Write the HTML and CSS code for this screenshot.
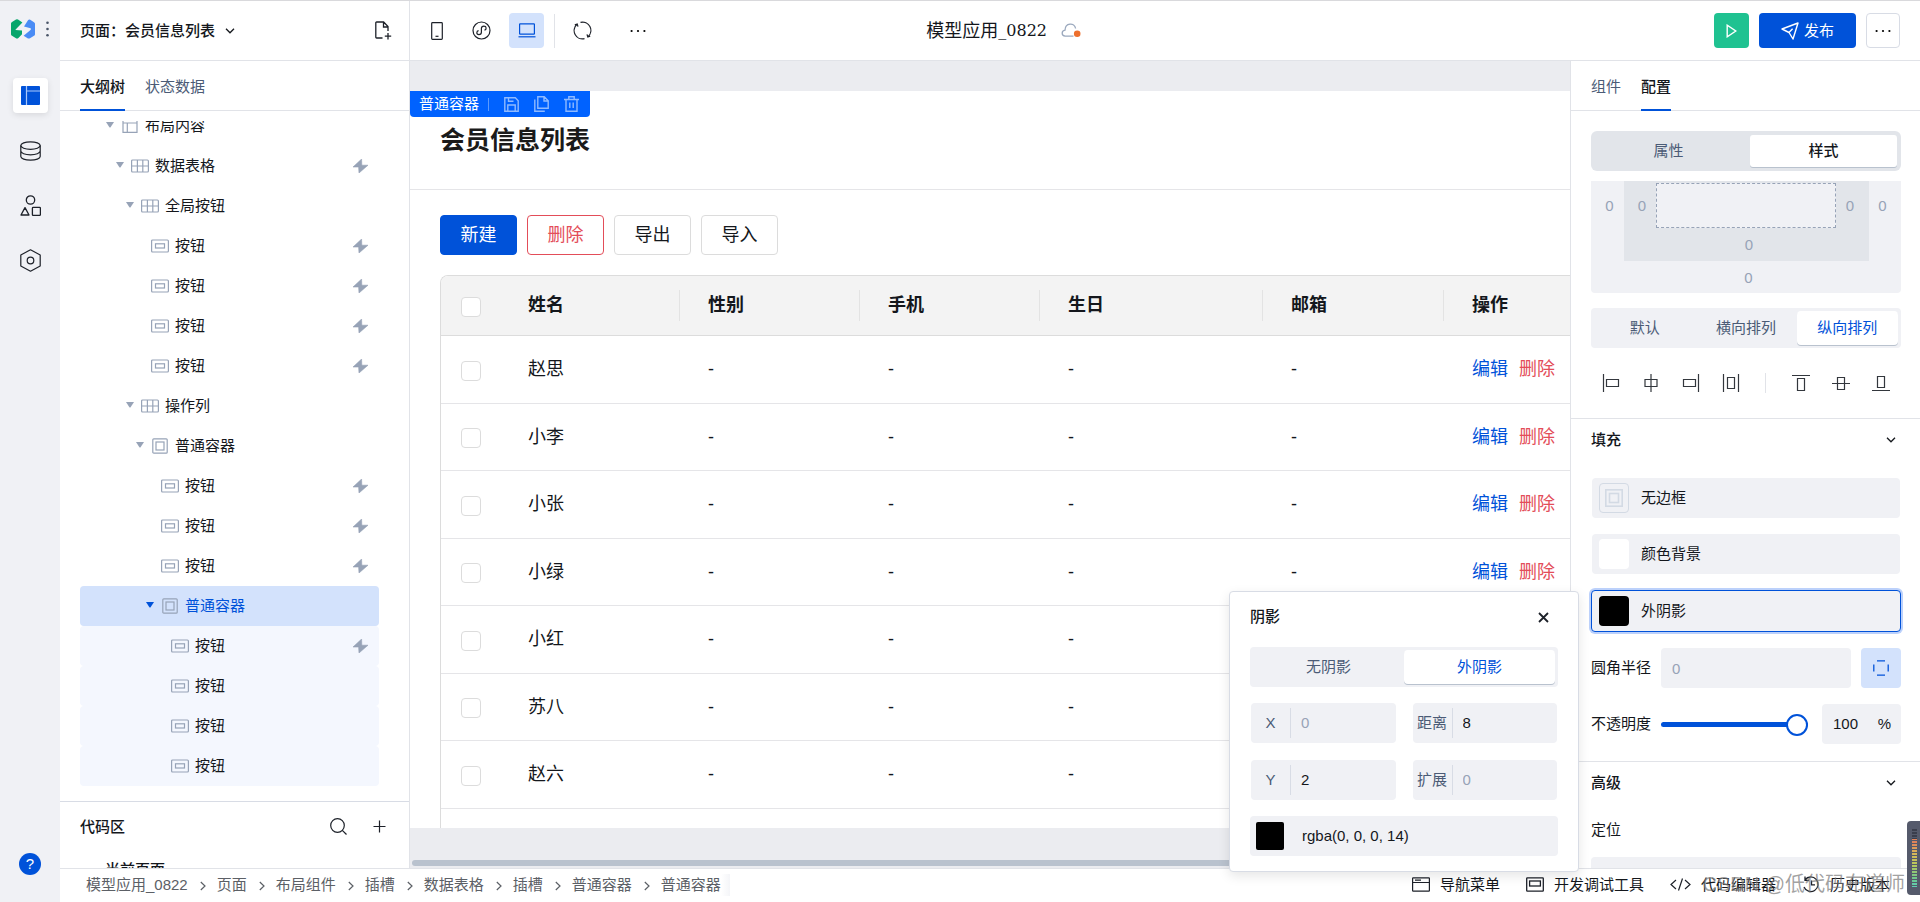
FILE: index.html
```html
<!DOCTYPE html>
<html lang="zh-CN">
<head>
<meta charset="utf-8">
<title>模型应用_0822</title>
<link rel="stylesheet" href="styles.css">
</head>
<body>
<svg class="sprite" aria-hidden="true">
  <symbol id="i-caret" viewBox="0 0 8 6"><path d="M0 0h8L4.6 5.2a.8.8 0 0 1-1.2 0z" fill="currentColor"/></symbol>
  <symbol id="i-bolt" viewBox="0 0 15 14"><path d="M8.600 0 0 8h5.600L6 14l9-7.800H8.800z" fill="currentColor" stroke="currentColor" stroke-width=".6"/></symbol>
  <symbol id="i-layout" viewBox="0 0 18 14"><path d="M2 .7h14v12.6H2zM2 4h14M6.3 4v9.3" fill="none" stroke="currentColor" stroke-width="1.2"/></symbol>
  <symbol id="i-grid" viewBox="0 0 18 14"><rect x=".6" y="1" width="16.8" height="12" rx="1" fill="none" stroke="currentColor" stroke-width="1.2"/><path d="M.6 7h16.8M6.4 1v12M11.8 1v12" stroke="currentColor" stroke-width="1.2"/></symbol>
  <symbol id="i-btn" viewBox="0 0 18 14"><rect x=".6" y="1" width="16.8" height="12" rx="1" fill="none" stroke="currentColor" stroke-width="1.2"/><rect x="4.5" y="4.8" width="9" height="4.2" fill="none" stroke="currentColor" stroke-width="1.2"/></symbol>
  <symbol id="i-box" viewBox="0 0 18 16"><rect x="1.8" y=".8" width="14.4" height="14.4" rx="1" fill="none" stroke="currentColor" stroke-width="1.2"/><rect x="5" y="4" width="8" height="8" fill="none" stroke="currentColor" stroke-width="1.2"/></symbol>
  <symbol id="i-down" viewBox="0 0 10 6"><path d="m1 .8 4 4 4-4" fill="none" stroke="currentColor" stroke-width="1.3"/></symbol>
  <symbol id="i-right" viewBox="0 0 6 10"><path d="m.8 1 4.2 4-4.2 4" fill="none" stroke="currentColor" stroke-width="1.2"/></symbol>
  <symbol id="i-more" viewBox="0 0 16 4"><circle cx="1.6" cy="2" r="1.1"/><circle cx="8" cy="2" r="1.1"/><circle cx="14.4" cy="2" r="1.1"/></symbol>
</svg>

<div class="app">
  <nav class="rail" aria-label="主导航">
    <div class="brand">
      <svg width="24" height="20" viewBox="0 0 24 20" role="img" aria-label="标志"><path d="M0 4.600Q0 3.600 1 3L5 .6q1-.6 2 0l4.400 2.800L5.600 9.400Q3.800 11 4.600 11L11 11.400v3.800L7.400 19q-1.400 1-2.800 0L1 16.800Q0 16.200 0 15.200z" fill="#07a66c"/><path d="M13 7.600 17 1.200Q18 0 19.200.8l3.800 2.400q1 .6 1 1.600v10.400q0 1-1 1.600L19 19.200q-1 .7-2 .2l-4.400-2.600 6.600-5.600Q21 9.600 18.600 9z" fill="#4a8cf5"/></svg>
      <svg width="3" height="16" viewBox="0 0 3 16" fill="#4a5568"><circle cx="1.500" cy="1.800" r="1.300"/><circle cx="1.500" cy="8" r="1.300"/><circle cx="1.500" cy="14.200" r="1.300"/></svg>
    </div>
    <button class="rail-btn active" aria-label="页面"><svg width="19" height="19" viewBox="0 0 19 19"><rect width="19" height="19" rx="1" fill="#0052d9"/><path d="M5.500 0v19M5.500 5h13.500" stroke="#a9c8fb" stroke-width="1.200"/></svg></button>
    <button class="rail-btn" aria-label="数据"><svg width="21" height="20" viewBox="0 0 21 20" fill="none" stroke="#1d2129" stroke-width="1.200"><ellipse cx="10.500" cy="4.600" rx="9.700" ry="3.800"/><path d="M.8 4.600v10.800c0 2.100 4.300 3.800 9.700 3.800s9.700-1.700 9.700-3.800V4.600M.8 10c0 2.100 4.300 3.800 9.700 3.800s9.700-1.700 9.700-3.800"/></svg></button>
    <button class="rail-btn" aria-label="组件"><svg width="21" height="21" viewBox="0 0 21 21" fill="none" stroke="#1d2129" stroke-width="1.300"><circle cx="10.500" cy="5" r="4.200"/><path d="M5 12.600 9 20H1z" stroke-linejoin="round"/><rect x="12.400" y="12.400" width="8" height="8" rx=".8"/></svg></button>
    <button class="rail-btn" aria-label="设置"><svg width="21" height="23" viewBox="0 0 21 23" fill="none" stroke="#1d2129" stroke-width="1.200"><path d="M10.500.8 20.200 6v11l-9.700 5.200L.8 17V6z" stroke-linejoin="round"/><circle cx="10.500" cy="11.500" r="3.300"/></svg></button>
    <button class="help" aria-label="帮助">?</button>
  </nav>

  <div class="work">
    <header class="side-head">
      <button class="page-pick"><span>页面：会员信息列表</span><svg width="10" height="6"><use href="#i-down"/></svg></button>
      <button class="plain" aria-label="新建页面"><svg width="17" height="19" viewBox="0 0 17 19" fill="none" stroke="#1d2129" stroke-width="1.300"><path d="M7.500 17H1.600a.8.8 0 0 1-.8-.8V1.800A.8.8 0 0 1 1.600 1h7l4.400 4.600V10M8.500 1v5H13M13 12v6.400M9.800 15.200h6.400"/></svg></button>
    </header>

    <header class="toolbar">
      <div class="tools">
        <button class="tool" aria-label="手机"><svg width="12" height="18" viewBox="0 0 12 18" fill="none" stroke="#1d2129" stroke-width="1.200"><rect x=".7" y=".7" width="10.600" height="16.600" rx=".8"/><path d="M4.500 14.300h3"/></svg></button>
        <button class="tool" aria-label="小程序"><svg width="19" height="19" viewBox="0 0 19 19" fill="none" stroke="#1d2129" stroke-width="1.200"><circle cx="9.500" cy="9.500" r="8.500"/><path d="M6.600 9.600C4.400 9.800 4 13.600 6.900 13.600c1.600 0 2.500-1 2.500-2.300V7.500c0-1.300 1-2.300 2.500-2.300 2.900 0 2.800 3.600.6 4"/></svg></button>
        <button class="tool on" aria-label="电脑"><svg width="18" height="15" viewBox="0 0 18 15" fill="none" stroke="#0052d9" stroke-width="1.200"><rect x="1.600" y=".8" width="14.800" height="10.400" rx=".5"/><path d="M.5 13.800h17"/></svg></button>
        <span class="vline"></span>
        <button class="tool" aria-label="刷新"><svg width="19" height="19" viewBox="0 0 19 19" fill="none" stroke="#1d2129" stroke-width="1.200"><path d="M11.500 17.600A8.300 8.300 0 0 1 4 3.300M7.500 1.400A8.300 8.300 0 0 1 15 15.700M1.800 3.800l2.400-.8.800 2.700M17.200 15.200l-2.400.8-.8-2.700"/></svg></button>
        <button class="tool gap" aria-label="更多"><svg width="16" height="4"><use href="#i-more"/></svg></button>
      </div>
      <h1 class="app-title"><span>模型应用</span><span class="app-no">_0822</span>
        <svg width="20" height="15" viewBox="0 0 20 15"><path d="M12.500 13.200H4.200C.2 13 .2 7.800 4 7.200 4.200-.6 13.600-.6 14.600 5.500" fill="none" stroke="#9aa8bd" stroke-width="1.300"/><circle cx="16.200" cy="10.800" r="3.300" fill="#ed6f2d"/></svg>
      </h1>
      <div class="actions">
        <button class="run" aria-label="预览"><svg width="11" height="14" viewBox="0 0 11 14"><path d="M1.200 1.200v11.600L9.800 7z" fill="none" stroke="#fff" stroke-width="1.400"/></svg></button>
        <button class="publish"><svg width="18" height="18" viewBox="0 0 18 18" fill="none" stroke="#fff" stroke-width="1.400"><path d="M1 7 17 1l-5 16-4-6.500z" stroke-linejoin="round"/><path d="m8 10.500 3.600-3.800"/></svg>发布</button>
        <button class="outline" aria-label="更多操作"><svg width="16" height="4"><use href="#i-more"/></svg></button>
      </div>
    </header>

    <aside class="side">
      <div class="tabs" role="tablist">
        <button class="tab on" role="tab">大纲树</button>
        <button class="tab" role="tab">状态数据</button>
      </div>
      <div class="tree-wrap">
        <ul class="tree">
          <li class="row l0"><svg class="caret"><use href="#i-caret"/></svg><svg class="ico"><use href="#i-layout"/></svg>布局内容</li>
          <li class="row l1"><svg class="caret"><use href="#i-caret"/></svg><svg class="ico"><use href="#i-grid"/></svg>数据表格<svg class="bolt"><use href="#i-bolt"/></svg></li>
          <li class="row l2"><svg class="caret"><use href="#i-caret"/></svg><svg class="ico"><use href="#i-grid"/></svg>全局按钮</li>
          <li class="row l3"><span class="caret"></span><svg class="ico"><use href="#i-btn"/></svg>按钮<svg class="bolt"><use href="#i-bolt"/></svg></li>
          <li class="row l3"><span class="caret"></span><svg class="ico"><use href="#i-btn"/></svg>按钮<svg class="bolt"><use href="#i-bolt"/></svg></li>
          <li class="row l3"><span class="caret"></span><svg class="ico"><use href="#i-btn"/></svg>按钮<svg class="bolt"><use href="#i-bolt"/></svg></li>
          <li class="row l3"><span class="caret"></span><svg class="ico"><use href="#i-btn"/></svg>按钮<svg class="bolt"><use href="#i-bolt"/></svg></li>
          <li class="row l2"><svg class="caret"><use href="#i-caret"/></svg><svg class="ico"><use href="#i-grid"/></svg>操作列</li>
          <li class="row l3"><svg class="caret"><use href="#i-caret"/></svg><svg class="ico"><use href="#i-box"/></svg>普通容器</li>
          <li class="row l4"><span class="caret"></span><svg class="ico"><use href="#i-btn"/></svg>按钮<svg class="bolt"><use href="#i-bolt"/></svg></li>
          <li class="row l4"><span class="caret"></span><svg class="ico"><use href="#i-btn"/></svg>按钮<svg class="bolt"><use href="#i-bolt"/></svg></li>
          <li class="row l4"><span class="caret"></span><svg class="ico"><use href="#i-btn"/></svg>按钮<svg class="bolt"><use href="#i-bolt"/></svg></li>
          <li class="row l4 selected"><svg class="caret"><use href="#i-caret"/></svg><svg class="ico"><use href="#i-box"/></svg>普通容器</li>
          <li class="row l5 child"><span class="caret"></span><svg class="ico"><use href="#i-btn"/></svg>按钮<svg class="bolt"><use href="#i-bolt"/></svg></li>
          <li class="row l5 child"><span class="caret"></span><svg class="ico"><use href="#i-btn"/></svg>按钮</li>
          <li class="row l5 child"><span class="caret"></span><svg class="ico"><use href="#i-btn"/></svg>按钮</li>
          <li class="row l5 child"><span class="caret"></span><svg class="ico"><use href="#i-btn"/></svg>按钮</li>
        </ul>
      </div>
      <section class="code">
        <div class="code-head">
          <h2>代码区</h2>
          <button class="plain" aria-label="搜索"><svg width="17" height="17" viewBox="0 0 17 17" fill="none" stroke="#1d2129" stroke-width="1.200"><circle cx="7.500" cy="7.500" r="6.800"/><path d="m12.300 12.300 4.200 4.200"/></svg></button>
          <button class="plain" aria-label="新增"><svg width="13" height="13" viewBox="0 0 13 13"><path d="M6.500.5v12M.5 6.500h12" stroke="#1d2129" stroke-width="1.200"/></svg></button>
        </div>
        <p class="code-item">当前页面</p>
      </section>
    </aside>

    <main class="stage">
      <div class="page">
        <div class="badge">
          <span class="badge-name">普通容器</span>
          <button class="badge-btn" aria-label="保存"><svg width="15" height="15" viewBox="0 0 15 15" fill="none" stroke="currentColor" stroke-width="1.400"><path d="M.8.800h10.500l2.900 2.900v10.500H.8zM3.800 14V8h7.400v6M4.500.800v3.400h5"/></svg></button>
          <button class="badge-btn" aria-label="复制"><svg width="15" height="16" viewBox="0 0 15 16" fill="none" stroke="currentColor" stroke-width="1.400"><path d="M3.800.8h6.400l4 4v7.400H3.800zM10 .8V5h4.200M.8 3.500v11.700h10"/></svg></button>
          <button class="badge-btn" aria-label="删除"><svg width="15" height="16" viewBox="0 0 15 16" fill="none" stroke="currentColor" stroke-width="1.400"><path d="M0 3.500h15M2 3.500v11.700h11V3.500M4.800 3.500V.800h5.400v2.700M5.800 6.500V12M9.200 6.500V12"/></svg></button>
        </div>
        <h2 class="page-title">会员信息列表</h2>
        <div class="page-body">
          <div class="btns">
            <button class="btn primary">新建</button>
            <button class="btn danger">删除</button>
            <button class="btn">导出</button>
            <button class="btn">导入</button>
          </div>
          <div class="table-wrap">
            <table class="table">
              <colgroup><col class="c-check"><col class="c-std"><col class="c-std"><col class="c-std"><col class="c-date"><col class="c-mail"><col></colgroup>
              <thead><tr><th class="check"><input type="checkbox" aria-label="全选"></th><th>姓名</th><th>性别</th><th>手机</th><th>生日</th><th>邮箱</th><th>操作</th></tr></thead>
              <tbody>
                <tr><td class="check"><input type="checkbox" aria-label="选择赵思"></td><td>赵思</td><td>-</td><td>-</td><td>-</td><td>-</td><td><a href="#">编辑</a><a href="#" class="del">删除</a></td></tr>
                <tr><td class="check"><input type="checkbox" aria-label="选择小李"></td><td>小李</td><td>-</td><td>-</td><td>-</td><td>-</td><td><a href="#">编辑</a><a href="#" class="del">删除</a></td></tr>
                <tr><td class="check"><input type="checkbox" aria-label="选择小张"></td><td>小张</td><td>-</td><td>-</td><td>-</td><td>-</td><td><a href="#">编辑</a><a href="#" class="del">删除</a></td></tr>
                <tr><td class="check"><input type="checkbox" aria-label="选择小绿"></td><td>小绿</td><td>-</td><td>-</td><td>-</td><td>-</td><td><a href="#">编辑</a><a href="#" class="del">删除</a></td></tr>
                <tr><td class="check"><input type="checkbox" aria-label="选择小红"></td><td>小红</td><td>-</td><td>-</td><td>-</td><td></td><td></td></tr>
                <tr><td class="check"><input type="checkbox" aria-label="选择苏八"></td><td>苏八</td><td>-</td><td>-</td><td>-</td><td></td><td></td></tr>
                <tr><td class="check"><input type="checkbox" aria-label="选择赵六"></td><td>赵六</td><td>-</td><td>-</td><td>-</td><td></td><td></td></tr>
                <tr><td></td><td></td><td></td><td></td><td></td><td></td><td></td></tr>
              </tbody>
            </table>
          </div>
        </div>
      </div>
      <div class="hscroll"><span class="hthumb"></span></div>
    </main>

    <aside class="props">
      <div class="tabs" role="tablist">
        <button class="tab" role="tab">组件</button>
        <button class="tab on" role="tab">配置</button>
      </div>
      <div class="props-body">
        <div class="block">
          <div class="switch"><button>属性</button><button class="on">样式</button></div>
          <div class="boxmodel">
            <input class="bm" placeholder="0" aria-label="左外边距">
            <div class="bm-inner">
              <input class="bm" placeholder="0" aria-label="左内边距">
              <div class="bm-core"></div>
              <input class="bm right" placeholder="0" aria-label="右内边距">
              <input class="bm wide" placeholder="0" aria-label="下内边距">
            </div>
            <input class="bm right" placeholder="0" aria-label="右外边距">
            <input class="bm wide" placeholder="0" aria-label="下外边距">
          </div>
          <div class="seg"><button>默认</button><button>横向排列</button><button class="on">纵向排列</button></div>
          <div class="aligns">
            <button aria-label="左对齐"><svg width="18" height="18" viewBox="0 0 18 18"><path d="M1.500 0v18M4.500 5.500h12v7h-12z"/></svg></button>
            <button aria-label="水平居中"><svg width="18" height="18" viewBox="0 0 18 18"><path d="M9 0v18M3 5.500h12v7H3z"/></svg></button>
            <button aria-label="右对齐"><svg width="18" height="18" viewBox="0 0 18 18"><path d="M16.500 0v18M1.500 5.500h12v7h-12z"/></svg></button>
            <button aria-label="水平分布"><svg width="18" height="18" viewBox="0 0 18 18"><path d="M1.500 0v18M16.500 0v18M5.500 3.500h7v11h-7z"/></svg></button>
            <span class="align-sep"></span>
            <button aria-label="顶对齐"><svg width="18" height="18" viewBox="0 0 18 18"><path d="M0 1.500h18M5.500 4.500h7v12h-7z"/></svg></button>
            <button aria-label="垂直居中"><svg width="18" height="18" viewBox="0 0 18 18"><path d="M0 9.500h18M5.500 3.500h7v12h-7z"/></svg></button>
            <button aria-label="底对齐"><svg width="18" height="18" viewBox="0 0 18 18"><path d="M0 16.500h18M5.500 2.500h7v11h-7z"/></svg></button>
          </div>
        </div>
        <section class="block line">
          <h3 class="sec">填充<svg width="10" height="6"><use href="#i-down"/></svg></h3>
          <div class="stack">
            <button class="fill"><span class="swatch frame"><svg width="18" height="18" viewBox="0 0 18 18" fill="none" stroke="#d3dae4" stroke-width="1.600"><rect x=".8" y=".8" width="16.400" height="16.400"/><rect x="4.500" y="4.500" width="9" height="9"/></svg></span>无边框</button>
            <button class="fill"><span class="swatch white"></span>颜色背景</button>
            <button class="fill focus"><span class="swatch black"></span>外阴影</button>
            <div class="field">
              <label for="radius">圆角半径</label>
              <input id="radius" class="input grow" placeholder="0">
              <button class="corner" aria-label="独立圆角"><svg width="16" height="16" viewBox="0 0 16 16" fill="none" stroke="#0052d9" stroke-width="1.300"><path d="M4 .8h8M4 15.200h8M.8 4.500v7M15.200 4.500v7"/></svg></button>
            </div>
            <div class="field opacity">
              <label for="opacity">不透明度</label>
              <input id="opacity" class="range" type="range" min="0" max="100" value="100">
              <span class="percent"><input value="100" aria-label="不透明度数值"><span>%</span></span>
            </div>
          </div>
        </section>
        <section class="block line">
          <h3 class="sec">高级<svg width="10" height="6"><use href="#i-down"/></svg></h3>
          <label class="pos" for="position">定位</label>
          <input id="position" class="input full">
        </section>
      </div>
    </aside>

    <footer class="footer">
      <nav class="crumbs" aria-label="路径">
        <a href="#">模型应用_0822</a><svg><use href="#i-right"/></svg>
        <a href="#">页面</a><svg><use href="#i-right"/></svg>
        <a href="#">布局组件</a><svg><use href="#i-right"/></svg>
        <a href="#">插槽</a><svg><use href="#i-right"/></svg>
        <a href="#">数据表格</a><svg><use href="#i-right"/></svg>
        <a href="#">插槽</a><svg><use href="#i-right"/></svg>
        <a href="#">普通容器</a><svg><use href="#i-right"/></svg>
        <a href="#" class="last">普通容器</a>
      </nav>
      <div class="foot-tools">
        <button><svg width="18" height="15" viewBox="0 0 18 15" fill="none" stroke="#1d2129" stroke-width="1.200"><rect x=".6" y=".8" width="16.800" height="13.400" rx=".6"/><path d="M.6 5.500h16.800M3 3.200h6"/></svg>导航菜单</button>
        <button><svg width="18" height="15" viewBox="0 0 18 15" fill="none" stroke="#1d2129" stroke-width="1.300"><rect x=".7" y=".8" width="16.600" height="13.400" rx=".6"/><rect x="3.600" y="4" width="10.800" height="5"/></svg>开发调试工具</button>
        <button><svg width="21" height="13" viewBox="0 0 21 13" fill="none" stroke="#1d2129" stroke-width="1.200"><path d="M6 2 1 6.500 6 11M15 2l5 4.500-5 4.500M12.500.5l-4 12"/></svg>代码编辑器</button>
        <button><svg width="18" height="17" viewBox="0 0 18 17" fill="none" stroke="#1d2129" stroke-width="1.300"><path d="M3 3.800A7.300 7.300 0 1 1 2 11M3 .5v3.800h4M9.500 4.500v4.300h3.500"/></svg>历史版本</button>
      </div>
    </footer>
  </div>
</div>

<section class="popup" role="dialog" aria-label="阴影">
  <div class="popup-head"><h3>阴影</h3><button class="plain" aria-label="关闭"><svg width="11" height="11" viewBox="0 0 11 11"><path d="m1 1 9 9M10 1l-9 9" stroke="#1d2129" stroke-width="1.800"/></svg></button></div>
  <div class="seg"><button>无阴影</button><button class="on">外阴影</button></div>
  <div class="pairs">
    <label class="pair"><span>X</span><input placeholder="0"></label>
    <label class="pair"><span>距离</span><input value="8"></label>
    <label class="pair"><span>Y</span><input value="2"></label>
    <label class="pair"><span>扩展</span><input placeholder="0"></label>
  </div>
  <button class="color"><span class="chip"></span>rgba(0, 0, 0, 14)</button>
</section>

<div class="watermark">CSDN @低代码布道师</div>
<div class="meter"><span></span></div>
</body>
</html>
```

FILE: styles.css
```css
* { box-sizing: border-box; }
body {
  margin: 0;
  height: 100vh;
  overflow: hidden;
  font-family: "Liberation Sans", "Noto Sans CJK SC", sans-serif;
  font-size: 15px;
  line-height: 22px;
  color: #14171c;
  background: #fff;
}
h1, h2, h3, p, ul { margin: 0; padding: 0; }
button, input { font: inherit; color: inherit; border: 0; background: none; padding: 0; margin: 0; }
button { display: inline-flex; align-items: center; justify-content: center; white-space: nowrap; }
input { min-width: 0; outline: 0; }
input::placeholder { color: #97a3b7; opacity: 1; }
a { text-decoration: none; color: inherit; }
svg { flex: none; display: block; }
.sprite { position: absolute; width: 0; height: 0; }

.app { display: flex; height: 100vh; border-top: 1px solid #d9d9dc; }

/* left rail */
.rail {
  flex: none;
  width: 60px;
  background: #f0f1f5;
  display: flex;
  flex-direction: column;
  align-items: center;
  gap: 20px;
  padding: 17px 0 27px;
}
.brand { display: flex; align-items: center; gap: 11px; height: 21px; margin-bottom: 19px; }
.rail-btn { width: 35px; height: 35px; border-radius: 4px; }
.rail-btn.active { background: #fff; box-shadow: 0 2px 6px rgba(0, 0, 0, .1); }
.help { width: 22px; height: 22px; margin-top: auto; border-radius: 50%; background: #0052d9; color: #fff; }

/* work area */
.work {
  flex: 1;
  min-width: 0;
  display: grid;
  grid-template-columns: 350px minmax(0, 1fr) 350px;
  grid-template-rows: 60px minmax(0, 1fr) 34px;
}
.side-head {
  display: flex;
  align-items: center;
  justify-content: space-between;
  padding: 0 17px 0 20px;
  border-right: 1px solid #e1e3e8;
  border-bottom: 1px solid #e1e3e8;
}
.page-pick { gap: 10px; font-weight: 500; }
.toolbar {
  grid-column: 2 / 4;
  display: flex;
  align-items: center;
  padding: 0 20px 0 9px;
  border-bottom: 1px solid #e1e3e8;
}
.tools { display: flex; align-items: center; gap: 10px; }
.tool { width: 35px; height: 35px; border-radius: 4px; }
.tool.on { background: #d3e2fc; }
.tool.gap { margin-left: 10px; }
.vline { width: 1px; height: 34px; background: #e1e3e8; }
.app-title {
  display: flex;
  align-items: center;
  flex: 3 0 auto;
  justify-content: flex-end;
  font-size: 18px;
  font-weight: 400;
  line-height: 26px;
}
.app-no { font-family: "DejaVu Serif", serif; font-size: 16px; }
.app-title svg { margin-left: 14px; }
.actions { flex: 7 0 auto; display: flex; justify-content: flex-end; gap: 10px; }
.actions button { height: 35px; border-radius: 4px; }
.run { width: 35px; background: #1fc291; }
.publish { width: 97px; gap: 5px; background: #0052d9; color: #fff; }
.outline { width: 34px; border: 1px solid #d8dce5; }

/* tabs */
.tabs { flex: none; display: flex; gap: 20px; height: 50px; padding: 0 20px; border-bottom: 1px solid #e1e3e8; }
.tab { height: 50px; padding-top: 3px; border-bottom: 2px solid transparent; color: #4b5b76; }
.tab.on { color: #14171c; border-color: #0052d9; font-weight: 500; }

/* outline tree */
.side { display: flex; flex-direction: column; min-height: 0; border-right: 1px solid #e1e3e8; }
.tree-wrap { flex: 1; min-height: 0; display: flex; flex-direction: column; justify-content: flex-end; overflow: hidden; margin-top: 10px; padding: 0 30px 15px 20px; }
.tree { list-style: none; }
.row { display: flex; align-items: center; height: 40px; padding-right: 11px; border-radius: 4px; }
.caret { flex: none; width: 8px; height: 6px; margin: 0 7px 3px 0; color: #97a3b7; }
.ico { width: 18px; height: 16px; margin-right: 6px; color: #97a3b7; }
.bolt { width: 15px; height: 14px; margin-left: auto; color: #97a3b7; }
.l0 { padding-left: 26px; }
.l1 { padding-left: 36px; }
.l2 { padding-left: 46px; }
.l3 { padding-left: 56px; }
.l4 { padding-left: 66px; }
.l5 { padding-left: 76px; }
.selected { background: #d3e2fc; color: #0052d9; }
.selected .caret { color: #0052d9; }
.child { background: #f4f7fe; }
.code { flex: none; height: 67px; overflow: hidden; border-top: 1px solid #d8dce5; }
.code-head { display: flex; align-items: center; gap: 26px; height: 49px; padding: 0 23px 0 20px; }
.code-head h2 { flex: 1; font-size: 15px; font-weight: 500; }
.code-item { padding-left: 45px; line-height: 38px; font-weight: 500; }

/* canvas */
.stage { display: flex; flex-direction: column; min-width: 0; min-height: 0; padding-top: 30px; background: #ebecf0; overflow: hidden; }
.page { position: relative; flex: 1; min-height: 0; overflow: hidden; background: #fff; }
.badge {
  position: absolute;
  top: 0;
  left: 0;
  display: flex;
  align-items: center;
  gap: 15px;
  height: 26px;
  padding: 0 11px 0 9px;
  border-radius: 0 0 4px 4px;
  background: #0062ff;
  color: #fff;
}
.badge-name { display: flex; align-items: center; }
.badge-name::after { content: ""; width: 1px; height: 13px; margin-left: 9px; background: #5c9bff; }
.badge-btn { width: 15px; color: #8fbaff; }
.page-title { height: 99px; padding: 31px 30px; border-bottom: 1px solid #e5e5e8; font-size: 25px; line-height: 36px; font-weight: 700; color: #1a1a1a; }
.page-body { padding: 25px 0 0 30px; }
.btns { display: flex; gap: 10px; margin-bottom: 20px; }
.btn { width: 77px; height: 40px; border: 1px solid #dcdcdc; border-radius: 4px; font-size: 18px; }
.btn.primary { border-color: #0052d9; background: #0052d9; color: #fff; }
.btn.danger { border-color: #e34d59; color: #e34d59; }
.table-wrap { border: 1px solid #dcdcdc; border-right: 0; border-radius: 8px 0 0 0; overflow: hidden; }
.table { width: 100%; table-layout: fixed; border-collapse: separate; border-spacing: 0; font-size: 18px; line-height: 26px; }
.c-check { width: 59px; }
.c-std { width: 180px; }
.c-date { width: 223px; }
.c-mail { width: 181px; }
.table th { position: relative; height: 60px; padding: 0 0 1px 28px; background: #f3f3f3; border-bottom: 1px solid #dcdcdc; text-align: left; font-weight: 700; }
.table th + th:not(:last-child)::after { content: ""; position: absolute; right: 0; top: 14px; width: 1px; height: 31px; background: #e3e3e3; }
.table td { height: 68px; padding: 0 0 1px 28px; border-bottom: 1px solid #e5e5e8; white-space: nowrap; }
.table tr:nth-child(even) td { height: 67px; }
.table .check { padding: 2px 0 0 20px; }
.table input { appearance: none; display: block; width: 20px; height: 20px; border: 1px solid #dcdcdc; border-radius: 4px; background: #fff; }
.table a { color: #0052d9; }
.table a.del { margin-left: 11px; color: #e34d59; }
.hscroll { flex: none; display: flex; align-items: flex-end; height: 40px; padding: 0 2px 2px; }
.hthumb { flex: 1; height: 6px; border-radius: 3px; background: #b9c2ce; }

/* property panel */
.props { display: flex; flex-direction: column; min-height: 0; border-left: 1px solid #e1e3e8; }
.props-body { flex: 1; min-height: 0; overflow: hidden; }
.block { padding: 0 19px 0 20px; }
.block:first-child { padding-top: 20px; }
.line { border-top: 1px solid #e1e3e8; }
.switch { display: flex; height: 40px; border-radius: 6px; background: #e2e5ea; color: #4b5b76; }
.switch button { flex: 1; margin: 4px; border-radius: 3px; }
.switch .on { background: #fff; color: #14171c; font-weight: 500; box-shadow: 0 1px 0 #b9c2ce; }
.boxmodel { display: grid; grid-template-columns: 33px 1fr 32px; grid-template-rows: 80px 32px; margin: 10px 0 15px; border-radius: 0 0 4px 4px; background: #f0f1f5; }
.bm-inner { display: grid; grid-template-columns: 32px 1fr 33px; grid-template-rows: 45px 33px; padding-top: 2px; background: #e2e5ea; }
.bm { width: 100%; height: 49px; padding-left: 4px; text-align: center; }
.bm.right { padding: 0 5px 0 0; }
.bm-inner .bm { height: 45px; }
.boxmodel .wide { grid-column: 1 / 4; height: 32px; padding-left: 5px; }
.bm-core { border: 1px dashed #97a3b7; background: #f0f1f5; }
.seg { display: flex; height: 40px; padding: 3px; border-radius: 4px; background: #f0f1f5; color: #4b5b76; }
.seg button { flex: 1; border-radius: 4px; }
.seg .on { background: #fff; color: #0052d9; box-shadow: 0 1px 0 #b9c2ce; }
.aligns { display: flex; align-items: center; height: 70px; }
.aligns button { width: 40px; height: 40px; }
.aligns path { fill: none; stroke: #33373d; stroke-width: 1.2; }
.align-sep { width: 1px; height: 20px; margin: 0 15px; background: #e1e3e8; }
.sec { display: flex; align-items: center; justify-content: space-between; height: 42px; padding-right: 5px; font-size: 15px; font-weight: 500; }
.stack { display: flex; flex-direction: column; gap: 16px; padding: 17px 0; }
.fill { justify-content: flex-start; gap: 12px; height: 40px; margin: 0 1px; padding-left: 7px; border-radius: 4px; background: #f0f1f5; }
.fill.focus { height: 42px; margin: 0; border: 1px solid #0052d9; box-shadow: 0 0 0 2px #bcd1fb; }
.swatch { display: flex; align-items: center; justify-content: center; width: 30px; height: 30px; border-radius: 4px; }
.frame { border: 1px solid #d3dae4; }
.white { background: #fff; }
.black { background: #000; }
.field { display: flex; align-items: center; gap: 10px; height: 40px; white-space: nowrap; }
.input { height: 40px; padding: 0 11px; border-radius: 4px; background: #f0f1f5; }
.grow { flex: 1; }
.full { display: block; width: 100%; margin-top: 16px; }
.pos { display: block; margin-top: 15px; }
.corner { width: 40px; height: 40px; border-radius: 4px; background: #d3e2fc; }
.range { appearance: none; flex: 1; height: 22px; margin-right: 4px; }
.range::-webkit-slider-runnable-track { height: 5px; border-radius: 3px; background: #0052d9; }
.range::-webkit-slider-thumb { appearance: none; width: 22px; height: 22px; margin-top: -8px; border: 2px solid #0052d9; border-radius: 50%; background: #fff; }
.percent { display: flex; align-items: center; gap: 8px; width: 79px; height: 40px; padding: 0 10px 0 11px; border-radius: 4px; background: #f0f1f5; }
.percent input { flex: 1; width: 0; }

/* footer */
.footer {
  grid-column: 1 / 4;
  display: flex;
  align-items: center;
  justify-content: space-between;
  padding: 0 30px 2px 26px;
  border-top: 1px solid #e1e3e8;
}
.crumbs { display: flex; align-items: center; color: #5c6066; white-space: nowrap; }
.crumbs svg { width: 6px; height: 10px; margin: 2px 11px 0 12px; }
.last { padding-right: 9px; background: linear-gradient(90deg, #fff 60px, #f4f5f8); }
.foot-tools { display: flex; gap: 26px; }
.foot-tools button { gap: 10px; }

/* shadow popup */
.popup {
  position: absolute;
  right: 341px;
  bottom: 30px;
  width: 350px;
  padding: 0 20px 15px;
  border: 1px solid #d8dce5;
  border-radius: 4px;
  background: #fff;
  box-shadow: 0 4px 12px rgba(0, 0, 0, .1);
}
.popup-head { display: flex; align-items: center; justify-content: space-between; height: 50px; margin-bottom: 5px; padding-right: 9px; }
.popup-head h3 { font-size: 15px; font-weight: 500; }
.pairs { display: grid; grid-template-columns: repeat(2, minmax(0, 1fr)); gap: 17px; margin: 16px 1px; }
.pair { display: flex; align-items: center; height: 40px; border-radius: 4px; background: #f0f1f5; }
.pair span { flex: none; width: 40px; height: 30px; line-height: 30px; text-align: center; border-right: 1px solid #d8dce5; color: #4b5b76; white-space: nowrap; }
.pair input { flex: 1; width: 0; padding: 0 10px; }
.color { display: flex; justify-content: flex-start; gap: 18px; width: 100%; height: 40px; padding-left: 6px; border-radius: 4px; background: #f0f1f5; }
.chip { width: 28px; height: 28px; border-radius: 2px; background: #000; }

/* overlays */
.watermark { position: absolute; right: 15px; bottom: 4px; font-size: 20px; line-height: 28px; color: rgba(120, 120, 120, .7); white-space: nowrap; pointer-events: none; }
.meter { position: absolute; right: 0; bottom: 7px; width: 13px; height: 74px; padding: 8px 3px 8px 5px; border-radius: 4px 0 0 4px; background: #555a6b; }
.meter span {
  display: block;
  height: 100%;
  background:
    repeating-linear-gradient(transparent 0 2px, #555a6b 2px 3px),
    linear-gradient(#3a3e4c 0 10px, #e0835a 10px 14px, #d8b659 24px, #b5c95c 36px, #6cc98f 50px, #5fcfb4);
}
```
